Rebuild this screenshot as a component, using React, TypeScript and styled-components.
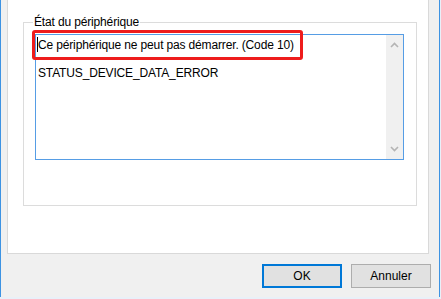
import React from "react";
import styled, { createGlobalStyle } from "styled-components";

const Global = createGlobalStyle`
  html, body { margin: 0; padding: 0; }
  body {
    background: #e9f0f8;
    font-family: "Liberation Sans", Arial, sans-serif;
    font-size: 12px;
    color: #000;
  }
`;

const Window = styled.div`
  box-sizing: border-box;
  width: 440px;
  height: 297px;
  background: #f0f0f0;
  border-left: 1px solid #3d93e3;
  border-right: 1px solid #3d93e3;
  display: flex;
  flex-direction: column;
  padding-left: 6px;
`;

const TabPage = styled.div`
  box-sizing: border-box;
  width: 422px;
  height: 254px;
  background: #fff;
  border: 1px solid #d9d9d9;
  border-top: none;
  padding: 14px 0 0 15px;
`;

const Group = styled.fieldset`
  box-sizing: border-box;
  margin: 0;
  width: 394px;
  height: 192px;
  border: 1px solid #dcdcdc;
  padding: 0 0 0 9px;
`;

const Legend = styled.legend`
  padding: 0 1px;
  line-height: 16px;
  font-size: 12px;
  letter-spacing: -0.15px;
`;

const TextBox = styled.div`
  position: relative;
  box-sizing: border-box;
  margin: 4px 0 0 2px;
  width: 369px;
  height: 126px;
  border: 1px solid #569de5;
  display: flex;
  background: #fff;
`;

const TextArea = styled.div`
  flex: 1;
  position: relative;
  padding: 3px 0 0 2px;
  line-height: 14px;
  white-space: pre-line;
  letter-spacing: -0.15px;
`;

const Caret = styled.span`
  position: absolute;
  left: 1px;
  top: 2px;
  width: 1px;
  height: 15px;
  background: #000;
`;

const Highlight = styled.div`
  position: absolute;
  left: -4px;
  top: -5px;
  width: 271px;
  height: 30px;
  box-sizing: border-box;
  border: 3px solid #ee1c1c;
  border-radius: 3px;
  pointer-events: none;
`;

const ScrollBar = styled.div`
  width: 17px;
  background: #f0f0f0;
  display: flex;
  flex-direction: column;
  justify-content: space-between;
`;

const ArrowBox = styled.div`
  height: 20px;
  display: flex;
  align-items: center;
  justify-content: center;
`;

const Buttons = styled.div`
  display: flex;
  justify-content: flex-end;
  gap: 9px;
  margin-top: 10px;
  padding-right: 8px;
`;

const Button = styled.button<{ $default?: boolean }>`
  box-sizing: border-box;
  width: 80px;
  height: 24px;
  margin: 0;
  padding: 0;
  background: #e1e1e1;
  border: ${(p) => (p.$default ? "2px solid #0078d7" : "1px solid #adadad")};
  font-family: "Liberation Sans", Arial, sans-serif;
  font-size: 12px;
  color: #000;
`;

const Chevron = ({ up }: { up?: boolean }) => (
  <svg width="9" height="6" viewBox="0 0 9 6">
    <path
      d={up ? "M1 5 L4.5 1.5 L8 5" : "M1 1 L4.5 4.5 L8 1"}
      fill="none"
      stroke="#b4b4b4"
      strokeWidth="1.6"
    />
  </svg>
);

export default function App() {
  return (
    <>
      <Global />
      <Window>
        <TabPage>
          <Group>
            <Legend>État du périphérique</Legend>
            <TextBox>
              <Highlight />
              <TextArea>
                <Caret />
                {"Ce périphérique ne peut pas démarrer. (Code 10)\n\nSTATUS_DEVICE_DATA_ERROR"}
              </TextArea>
              <ScrollBar>
                <ArrowBox>
                  <Chevron up />
                </ArrowBox>
                <ArrowBox>
                  <Chevron />
                </ArrowBox>
              </ScrollBar>
            </TextBox>
          </Group>
        </TabPage>
        <Buttons>
          <Button $default>OK</Button>
          <Button>Annuler</Button>
        </Buttons>
      </Window>
    </>
  );
}
